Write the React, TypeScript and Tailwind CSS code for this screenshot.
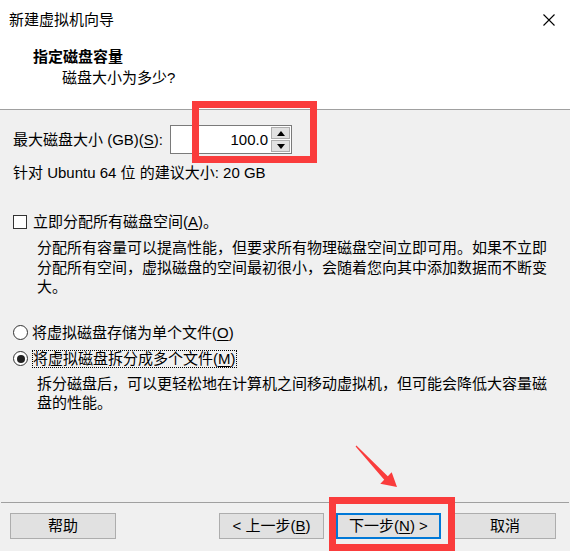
import React from "react";

const font = "font-['Liberation_Sans','Noto_Sans_CJK_SC',sans-serif]";

function Key({ k }: { k: string }) {
  return (
    <>
      (<span className="underline underline-offset-2">{k}</span>)
    </>
  );
}

function Button({
  children,
  primary,
  className = "",
}: {
  children: React.ReactNode;
  primary?: boolean;
  className?: string;
}) {
  return (
    <div
      className={`h-[26px] flex items-center justify-center bg-[#e1e1e1] text-[15px] leading-5 text-black ${
        primary ? "border-2 border-[#0078d7]" : "border border-[#adadad]"
      } ${className}`}
    >
      {children}
    </div>
  );
}

function Radio({ checked }: { checked?: boolean }) {
  return (
    <div className="w-[15px] h-[15px] rounded-full border border-[#333] bg-white flex items-center justify-center shrink-0">
      {checked && <div className="w-[8px] h-[8px] rounded-full bg-[#222]" />}
    </div>
  );
}

export default function App() {
  return (
    <div className={`relative w-[570px] h-[551px] bg-[#f0f0f0] flex flex-col text-black ${font}`}>
      {/* header */}
      <div className="h-[110px] bg-white border-b border-[#a0a0a0]">
        <div className="h-10 flex items-center justify-between pl-[9px] pr-[15px]">
          <span className="text-[15px] leading-5">新建虚拟机向导</span>
          <svg width="12" height="12" viewBox="0 0 12 12">
            <path d="M0.5 0.5 L11.5 11.5 M11.5 0.5 L0.5 11.5" stroke="#000" strokeWidth="1.1" />
          </svg>
        </div>
        <div className="mt-[7px] pl-[33px] text-[15px] leading-5 font-bold">指定磁盘容量</div>
        <div className="mt-px pl-[62px] text-[15px] leading-5">磁盘大小为多少?</div>
      </div>

      {/* body */}
      <div className="pl-[13px] text-[15px] leading-5">
        <div className="mt-[15px] flex items-center h-[29px]">
          <span className="w-[157px]">
            最大磁盘大小 (GB)<Key k="S" />:
          </span>
          <div className="flex h-[29px] w-[122px] border border-[#7a7a7a] bg-white">
            <div className="flex-1 flex items-center justify-end pr-[2px]">100.0</div>
            <div className="w-[21px] flex flex-col gap-px p-px">
              <div className="flex-1 bg-[#e1e1e1] border border-[#adadad] flex items-center justify-center">
                <svg width="8" height="5" viewBox="0 0 8 5">
                  <path d="M4 0 L8 5 L0 5 Z" fill="#000" />
                </svg>
              </div>
              <div className="flex-1 bg-[#e1e1e1] border border-[#adadad] flex items-center justify-center">
                <svg width="8" height="5" viewBox="0 0 8 5">
                  <path d="M0 0 L8 0 L4 5 Z" fill="#000" />
                </svg>
              </div>
            </div>
          </div>
        </div>

        <div className="mt-[9px]">针对 Ubuntu 64 位 的建议大小: 20 GB</div>

        <div className="mt-[29px] flex items-center gap-[6px]">
          <div className="w-[14px] h-[14px] border border-[#333] bg-white" />
          <span>
            立即分配所有磁盘空间<Key k="A" />。
          </span>
        </div>
        <p className="mt-[6px] pl-[24px] leading-[19.5px]">
          分配所有容量可以提高性能，但要求所有物理磁盘空间立即可用。如果不立即
          <br />
          分配所有空间，虚拟磁盘的空间最初很小，会随着您向其中添加数据而不断变
          <br />
          大。
        </p>

        <div className="mt-[26px] flex items-center gap-[4px]">
          <Radio />
          <span>
            将虚拟磁盘存储为单个文件<Key k="O" />
          </span>
        </div>
        <div className="mt-[7px] flex items-center gap-[4px]">
          <Radio checked />
          <span className="h-[18px] flex items-center border border-dotted border-black">
            将虚拟磁盘拆分成多个文件<Key k="M" />
          </span>
        </div>
        <p className="mt-[6px] pl-[24px] leading-[19px]">
          拆分磁盘后，可以更轻松地在计算机之间移动虚拟机，但可能会降低大容量磁
          <br />
          盘的性能。
        </p>
      </div>

      {/* footer */}
      <div className="mt-auto mx-px border-t border-[#a0a0a0] pt-[10px] pb-[12px] pl-[9px] pr-[13px] flex items-center">
        <Button className="w-[106px]">帮助</Button>
        <div className="flex-1" />
        <Button className="w-[105px]">
          &lt; 上一步<Key k="B" />
        </Button>
        <Button primary className="w-[105px] ml-[12px]">
          下一步<Key k="N" /> &gt;
        </Button>
        <Button className="w-[102px] ml-[13px]">取消</Button>
      </div>

      {/* annotations */}
      <div className="absolute left-[192px] top-[101px] w-[125px] h-[62px] border-[7px] border-[#fa3c3c]" />
      <div className="absolute left-[329px] top-[497px] w-[126px] h-[54px] border-[7px] border-[#fa3c3c]" />
      <svg className="absolute left-0 top-0 pointer-events-none" width="570" height="551">
        <polygon
          points="355.6,446.4 384.2,479.8 380.3,483.7 397,487 391.7,472.3 387.8,476.2 356.4,445.6"
          fill="#fa3c3c"
        />
      </svg>
    </div>
  );
}
